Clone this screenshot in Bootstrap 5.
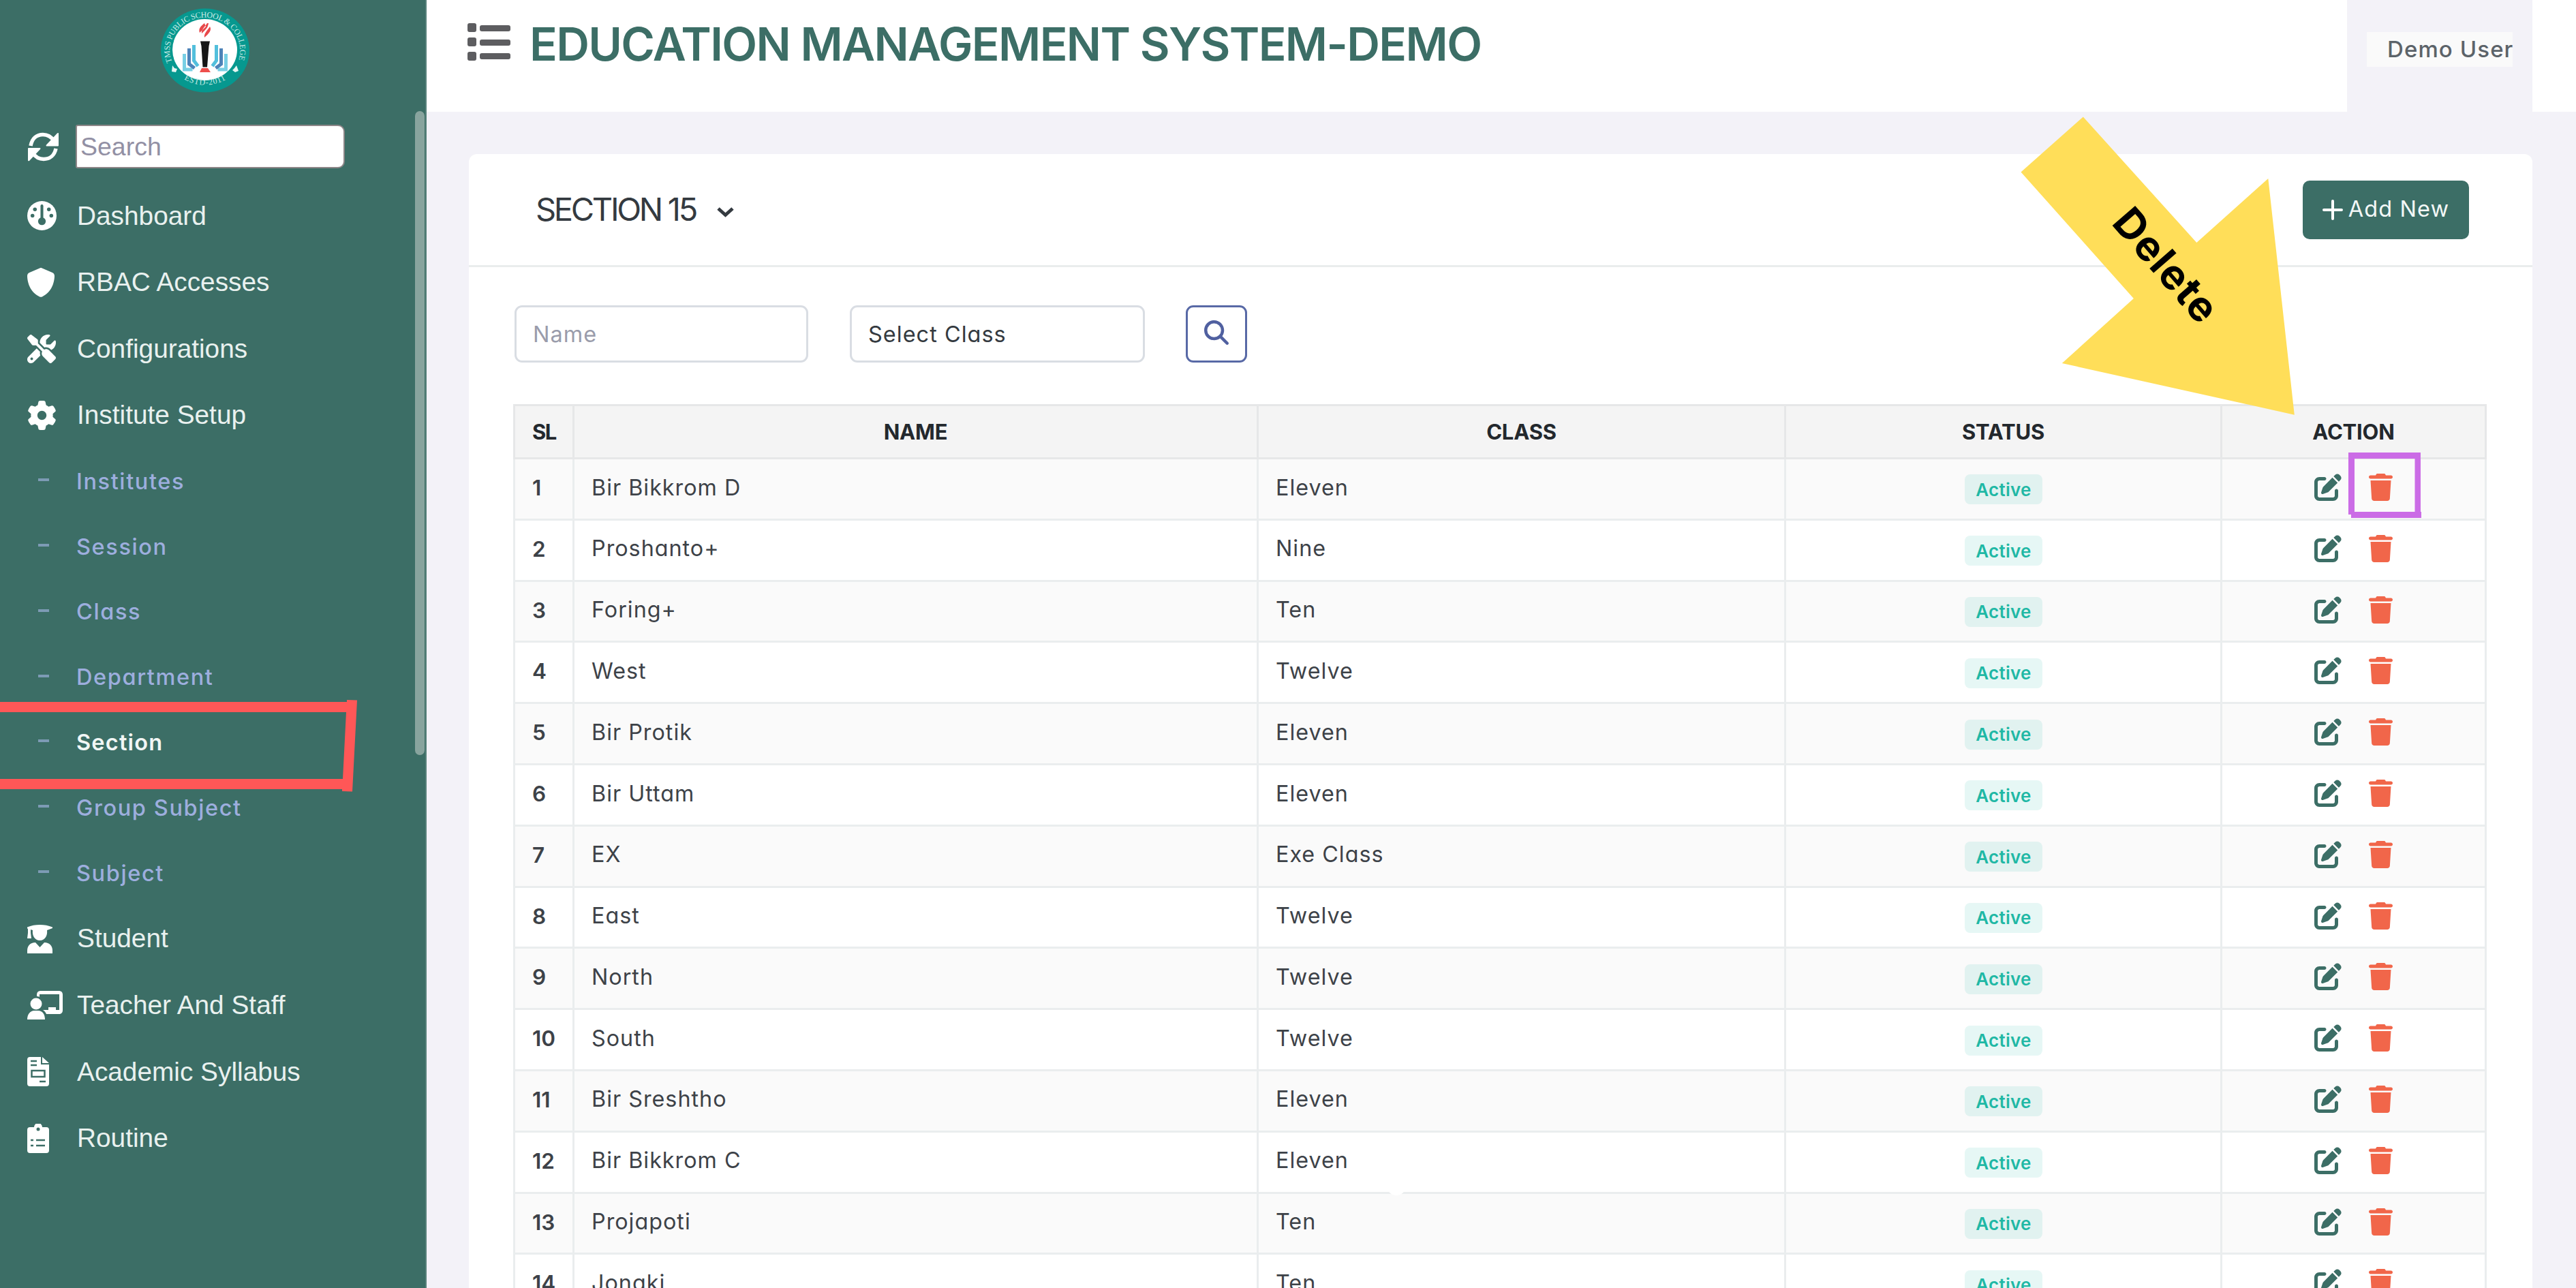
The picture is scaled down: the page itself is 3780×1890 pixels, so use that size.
<!DOCTYPE html>
<html lang="en">
<head>
<meta charset="utf-8">
<title>Education Management System - Section</title>
<link href="https://cdn.jsdelivr.net/npm/bootstrap@5.3.0/dist/css/bootstrap.min.css" rel="stylesheet">
<style>
:root{--brand:#3c6e66}
html,body{width:3780px;height:1890px;overflow:hidden}
body{font-family:Inter,"Noto Sans",sans-serif;font-feature-settings:"cv11" 1;font-size:31.5px;background:#f3f2f8;color:#343a40;line-height:1.2}
.app-shell{width:3780px;height:1890px;overflow:hidden}
.side{width:626px;background:var(--brand);border-right:2px solid #57827b;flex:none;font-family:"Liberation Sans",Arial,sans-serif}
.side-logo{height:168px;padding:11px 0 0 234px}
.side-search{height:100px;padding:15px 0 0 40px}
.side-search svg{width:47px;height:47px;margin:9px 24px 0 0}
.side-search input{width:395px;height:64px;border:2px solid #8d8688;border-radius:3px 10px 10px 3px;padding:0 5px;font-size:37.5px;color:#333}
.side-search input::placeholder{color:#9290a4;opacity:1}
.menu-main{height:97.6px;padding-left:40px;font-size:38.8px;color:#e9f1ef;white-space:nowrap}
.menu-main .ic{width:73px;flex:none;display:flex}
.menu-sub{height:95.8px;padding:0 0 0 56px;font-family:Inter,sans-serif;font-weight:500;font-size:32.5px;letter-spacing:1.6px;color:#9daede;white-space:nowrap}
.menu-sub i{width:16px;height:4px;background:#7d9bb5;margin:-4px 40px 0 0;flex:none}
.menu-sub.on{color:#f1f6f5;font-weight:600;letter-spacing:1.2px}
.scroll-thumb{left:609px;top:163px;width:14px;height:945px;border-radius:7px;background:#88a49e}
.topbar{height:164px;background:#fff;padding:0 64px 0 60px}
.brand-name{font-size:67.5px;font-weight:600;color:var(--brand);letter-spacing:-1.65px;line-height:1;padding-left:28px;margin:31px 0 0;white-space:nowrap}
.user-box{width:272px;background:#f3f2f8;padding:47px 29px 0}
.user-box div{height:51px;background:#fafafa;padding:6px 0 0 30px;font-size:33px;font-weight:500;color:#5c6369;white-space:nowrap;letter-spacing:1.1px}
.panel{margin:62px 64px 0 62px;height:1700px;border:0;border-radius:12px;background:#fff}
.panel>*{flex-shrink:0}
.panel-top{height:166px;border-bottom:3px solid #eaeded;padding:0 93px 0 98px}
.panel-top h2{font-size:47px;font-weight:400;margin:0;letter-spacing:-3.3px;white-space:nowrap}
.btn-add{width:244px;height:86px;background:var(--brand);color:#f3f7f6;border-radius:10px;font-size:32.5px;padding:0;letter-spacing:1.1px}
.btn-add:hover{background:var(--brand);color:#fff}
.filters{padding:56px 0 0 67px}
.filters .fld{height:84px;border:3px solid #d9dde3;border-radius:11px;padding:0 24px;font-size:32.5px;letter-spacing:1px;color:#343a40;background:#fff;display:flex;align-items:center}
.filters input.fld::placeholder{color:#9a9cab;opacity:1}
.btn-find{width:90px;height:84px;border:3px solid #5869a6;border-radius:11px;margin-left:60px;padding:0}
.grid-table{width:2893px;margin:61px 0 0 65px;table-layout:fixed;border-collapse:collapse;color:#3d4248;--bs-table-bg:transparent}
.grid-table th,.grid-table td{border:3px solid #eaedee;padding:0 0 3px 25px;height:89.8px;vertical-align:middle;white-space:nowrap}
.grid-table td{font-size:32.3px;letter-spacing:1px}
.grid-table thead th{height:78px;background:#f4f4f4;border-color:#e6e7e8;color:#23282d;font-weight:700;text-align:center;font-size:31px;letter-spacing:-.2px;padding:0}
.grid-table thead th:first-child{text-align:left;padding-left:25px;letter-spacing:-1.5px}
.grid-table tbody th{font-weight:600}
.grid-table tbody tr:nth-child(odd){background:#fafafa}
.grid-table td.mid{text-align:center;padding:0 0 0 1px;letter-spacing:0}
.grid-table td.acts{padding:0 0 6px}
.pill{display:inline-flex;width:114px;height:44px;border-radius:8px;background:rgba(10,179,156,.1);color:#1fb8a5;font-size:26px;font-weight:600;letter-spacing:.3px;align-items:center;justify-content:center;vertical-align:middle;position:relative;top:1px}
.overlay{left:0;top:0;pointer-events:none}
</style>
<script src="https://cdn.jsdelivr.net/npm/bootstrap@5.3.0/dist/js/bootstrap.bundle.min.js"></script>
</head>
<body>
<svg width="0" height="0" class="position-absolute">
<symbol id="pen" viewBox="0 0 512 512"><path d="M471.6 21.7c-21.9-21.9-57.3-21.9-79.2 0L362.3 51.7l97.9 97.9 30.1-30.1c21.9-21.9 21.9-57.3 0-79.2L471.6 21.7zm-299.2 220c-6.1 6.1-10.8 13.6-13.5 21.9l-29.6 88.8c-2.9 8.6-.6 18.1 5.8 24.6s15.9 8.7 24.6 5.8l88.8-29.6c8.2-2.7 15.7-7.4 21.9-13.5L437.7 172.3 339.7 74.3 172.4 241.7zM96 64C43 64 0 107 0 160V416c0 53 43 96 96 96H352c53 0 96-43 96-96V320c0-17.7-14.3-32-32-32s-32 14.3-32 32v96c0 17.7-14.3 32-32 32H96c-17.7 0-32-14.3-32-32V160c0-17.7 14.3-32 32-32h96c17.7 0 32-14.3 32-32s-14.3-32-32-32H96z"/></symbol>
<symbol id="bin" viewBox="0 0 448 512"><path d="M135.2 17.7L128 32H32C14.3 32 0 46.3 0 64S14.3 96 32 96H416c17.7 0 32-14.3 32-32s-14.3-32-32-32H320l-7.2-14.3C307.4 6.8 296.3 0 284.2 0H163.8c-12.1 0-23.2 6.8-28.6 17.7zM416 128H32L53.2 467c1.6 25.3 22.6 45 47.9 45H346.9c25.3 0 46.3-19.7 47.9-45L416 128z"/></symbol>
</svg>

<div class="app-shell d-flex position-relative">
<nav class="side">
  <div class="side-logo">
    <svg width="134" height="126" viewBox="0 0 134 126" preserveAspectRatio="none">
      <ellipse cx="67" cy="63" rx="65" ry="61.5" fill="#06988f"/>
      <ellipse cx="66.500" cy="62" rx="47.500" ry="45" fill="#fff"/>
      <defs><path id="ringTop" d="M18.500 80A51.500 48.500 0 1 1 115 80"/><path id="ringLow" d="M31 102A59 56 0 0 0 103 102"/></defs>
      <g font-family="Liberation Serif,serif" font-size="12" fill="#c9ebe6"><text><textPath href="#ringTop" textLength="188">TMSS PUBLIC SCHOOL &amp; COLLEGE</textPath></text>
      <text><textPath href="#ringLow" startOffset="6" textLength="64">ESTD-2011</textPath></text></g>
      <path d="M19 85l3 4 4 1-2 5-6-1zM113 85l-3 4-3 3 4 3 5-2z" fill="#e4f5f2"/>
      <path d="M66 24c-6 5-9 8-7 14l9-9zM70 24l2 0c-1 7-3 8-10 15-1-5 4-9 8-15zM74 29c3 5-1 10-8 16-1-5 3-9 8-16z" fill="#e8484a" transform="translate(0 -1)"/>
      <path d="M60 49.500h14l-1.500 7-2.500 31h-6.500l-2-31z" fill="#151515"/><path d="M62 89h9l4 6H59z" fill="#ee4f4c"/>
      <g fill="none" stroke-width="5"><path d="M36.500 68v23h12M97.500 68v23h-12" stroke="#78cfe4"/><path d="M43.500 60v23l8 6M90.500 60v23l-8 6" stroke="#4d83b8"/><path d="M50.500 55v23l6 8M83.500 55v23l-6 8" stroke="#52bfdc"/></g>
    </svg>
  </div>
  <div class="side-search d-flex align-items-start">
    <svg viewBox="0 0 47 47"><g fill="none" stroke="#fff" stroke-width="5.500"><path d="M5 22C7 11 14 5.500 23 5.500c7 0 12 3 16 9"/><path d="M42 26C40 36 33 41.500 24 41.500c-7 0-12-3-16-9"/></g><path d="M46 4v17.500q0 1-1 1H28q-1-1 0-2L44 3.500q2-1 2 .5zM1 43V26q0-1 1-1h17q1 1 0 2L3 44q-2 1-2-1z" fill="#fff"/></svg>
    <input type="text" placeholder="Search">
  </div>
  <div class="menu-main d-flex align-items-center"><span class="ic"><svg width="43" height="43" viewBox="0 0 42 42"><circle cx="21" cy="21" r="21" fill="#fff"/><g fill="#3c6e66"><rect x="19" y="5" width="4" height="24" rx="2"/><circle cx="21" cy="29" r="5.500"/><circle cx="11" cy="12" r="2.700"/><circle cx="31" cy="12" r="2.700"/><circle cx="7.500" cy="21" r="2.700"/><circle cx="34.500" cy="21" r="2.700"/></g></svg></span>Dashboard</div>
  <div class="menu-main d-flex align-items-center"><span class="ic"><svg width="40" height="43" viewBox="16 0 480 512" preserveAspectRatio="none" fill="#fff"><path d="M256 0c4.600 0 9.200 1 13.400 2.900L457.700 82.800c22 9.300 38.400 31 38.300 57.200c-.5 99.200-41.300 280.700-213.600 363.200c-16.700 8-36.100 8-52.800 0C57.300 420.700 16.500 239.200 16 140c-.1-26.200 16.300-47.900 38.300-57.200L242.700 2.900C246.800 1 251.400 0 256 0z"/></svg></span>RBAC Accesses</div>
  <div class="menu-main d-flex align-items-center"><span class="ic"><svg width="42" height="42" viewBox="0 0 512 512" fill="#fff"><path d="M78.600 5C69.100-2.400 55.600-1.500 47 7L7 47c-8.500 8.500-9.400 22-2.100 31.600l80 104c4.500 5.900 11.600 9.400 19 9.400h54.100l109 109c-14.700 29-10 65.400 14.300 89.600l112 112c12.500 12.500 32.800 12.500 45.300 0l64-64c12.500-12.500 12.500-32.800 0-45.300l-112-112c-24.200-24.200-60.600-29-89.600-14.300l-109-109V104c0-7.500-3.500-14.500-9.400-19L78.600 5zM19.900 396.100C7.200 408.800 0 426.100 0 444.100C0 481.600 30.400 512 67.900 512c18 0 35.300-7.200 48-19.900L233.700 374.300c-7.800-20.900-9-43.600-3.600-65.100l-61.700-61.700L19.900 396.100zM512 144c0-10.500-1.100-20.700-3.200-30.500c-2.400-11.200-16.100-14.100-24.200-6l-63.900 63.900c-3 3-7.100 4.700-11.300 4.700H352c-8.800 0-16-7.200-16-16V102.600c0-4.200 1.700-8.300 4.700-11.300l63.900-63.900c8.100-8.100 5.200-21.800-6-24.200C388.700 1.100 378.500 0 368 0C288.500 0 224 64.500 224 144l0 .8 85.300 85.300c36-9.100 75.800 .5 104 28.700L429 274.500c49-23 83-72.800 83-130.500zM56 432a24 24 0 1 1 48 0 24 24 0 1 1 -48 0z"/></svg></span>Configurations</div>
  <div class="menu-main d-flex align-items-center"><span class="ic"><svg width="43" height="43" viewBox="0 0 512 512" fill="#fff"><path fill-rule="evenodd" d="M495.900 166.600c3.200 8.700 .5 18.400-6.400 24.600l-43.300 39.400c1.100 8.300 1.700 16.800 1.700 25.400s-.6 17.100-1.700 25.400l43.300 39.400c6.900 6.200 9.600 15.900 6.400 24.600c-4.400 11.900-9.700 23.300-15.800 34.300l-4.700 8.100c-6.600 11-14 21.400-22.100 31.200c-5.900 7.200-15.700 9.600-24.500 6.800l-55.700-17.700c-13.400 10.300-28.200 18.900-44 25.400l-12.500 57.100c-2 9.100-9 16.300-18.200 17.800c-13.800 2.300-28 3.500-42.500 3.500s-28.700-1.200-42.500-3.500c-9.200-1.500-16.200-8.700-18.200-17.800l-12.500-57.100c-15.800-6.500-30.600-15.100-44-25.400L83.100 425.900c-8.800 2.800-18.600 .3-24.500-6.800c-8.100-9.800-15.500-20.200-22.100-31.200l-4.700-8.100c-6.100-11-11.400-22.400-15.800-34.300c-3.200-8.700-.5-18.400 6.400-24.600l43.300-39.400C64.600 273.100 64 264.600 64 256s.6-17.100 1.700-25.400L22.400 191.200c-6.900-6.200-9.600-15.900-6.400-24.600c4.400-11.900 9.700-23.300 15.800-34.300l4.700-8.100c6.600-11 14-21.400 22.100-31.200c5.900-7.200 15.700-9.600 24.500-6.800l55.700 17.700c13.400-10.300 28.200-18.900 44-25.400l12.500-57.100c2-9.100 9-16.300 18.200-17.800C227.300 1.200 241.500 0 256 0s28.700 1.200 42.500 3.500c9.200 1.500 16.200 8.700 18.200 17.800l12.500 57.100c15.800 6.500 30.600 15.100 44 25.400l55.700-17.700c8.800-2.800 18.600-.3 24.500 6.800c8.100 9.800 15.500 20.200 22.100 31.200l4.700 8.100c6.100 11 11.400 22.400 15.800 34.300zM256 336a80 80 0 1 0 0-160 80 80 0 1 0 0 160z"/></svg></span>Institute Setup</div>
  <div class="menu-sub d-flex align-items-center"><i></i>Institutes</div>
  <div class="menu-sub d-flex align-items-center"><i></i>Session</div>
  <div class="menu-sub d-flex align-items-center"><i></i>Class</div>
  <div class="menu-sub d-flex align-items-center"><i></i>Department</div>
  <div class="menu-sub on d-flex align-items-center"><i></i>Section</div>
  <div class="menu-sub d-flex align-items-center"><i></i>Group Subject</div>
  <div class="menu-sub d-flex align-items-center"><i></i>Subject</div>
  <div class="menu-main d-flex align-items-center"><span class="ic"><svg width="37" height="43" viewBox="0 0 37 43" fill="#fff"><path d="M0 4.500C6 2 12 1 18.500 1S31 2 37 4.500v1.500L29 9c1 8-3 15-10.500 15S7 17 8 9L5 8v5l1 8H0l1-8V7.500L0 6zM0 43v-4c0-7 4-12 12-12l6.500 7L25 27c8 0 12 5 12 12v4z"/></svg></span>Student</div>
  <div class="menu-main d-flex align-items-center"><span class="ic"><svg width="53" height="42" viewBox="0 0 53 42" fill="#fff"><circle cx="13" cy="19" r="8.500"/><path d="M0 42c0-8 5-13 10-13h6c6 0 10 5 10 13zM14 8V6c0-4 2-6 6-6h26c4 0 6 2 6 6v22c0 4-2 6-6 6H28c-1-2-2-4-5-6h8v-4h11v4h5V5H18v4c-1-1-3-1-4-1z"/></svg></span>Teacher And Staff</div>
  <div class="menu-main d-flex align-items-center"><span class="ic"><svg width="32" height="43" viewBox="0 0 32 43"><path d="M4 0h16v11h12v28q0 4-4 4H4q-4 0-4-4V4q0-4 4-4zM22 0l10 9H22z" fill="#fff"/><g stroke="#3c6e66" stroke-width="2.500" fill="none"><path d="M5 6h9M5 12h9M18 36h9"/><rect x="6.500" y="20" width="19" height="9"/></g></svg></span>Academic Syllabus</div>
  <div class="menu-main d-flex align-items-center"><span class="ic"><svg width="32" height="43" viewBox="0 0 32 43"><path d="M4 5h6a6 6 0 0 1 12 0h6q4 0 4 4v30q0 4-4 4H4q-4 0-4-4V9q0-4 4-4z" fill="#fff"/><g stroke="#3c6e66" stroke-width="2.500"><path d="M5 24h4M13 24h13M5 32h4M13 32h13"/></g><circle cx="16" cy="8" r="2.500" fill="#3c6e66"/></svg></span>Routine</div>
</nav>
<div class="scroll-thumb position-absolute"></div>

<main class="flex-grow-1">
  <header class="topbar d-flex">
    <svg width="63" height="55" viewBox="0 0 63 55" style="margin-top:34px" fill="#5d5d60"><rect width="13" height="13" rx="3"/><rect y="21" width="13" height="13" rx="3"/><rect y="42" width="13" height="13" rx="3"/><rect x="18" y="3" width="45" height="9" rx="3"/><rect x="18" y="24" width="45" height="9" rx="3"/><rect x="18" y="44" width="45" height="9" rx="3"/></svg>
    <h1 class="brand-name">EDUCATION MANAGEMENT SYSTEM-DEMO</h1>
    <div class="user-box ms-auto"><div>Demo User</div></div>
  </header>
  <section class="panel card">
    <div class="panel-top d-flex align-items-center justify-content-between">
      <h2>SECTION 15 <svg width="27" height="18" viewBox="0 0 27 18" style="margin-left:20px"><path d="M3 4l10.500 9.500L24 4" fill="none" stroke="#343a40" stroke-width="5"/></svg></h2>
      <button class="btn btn-add d-flex align-items-center justify-content-center"><svg width="30" height="30" viewBox="0 0 30 30" class="me-2"><path d="M15 2v26M2 15h26" stroke="#fff" stroke-width="4" stroke-linecap="round"/></svg>Add New</button>
    </div>
    <div class="filters d-flex">
      <input class="fld" type="text" placeholder="Name" size="1" style="width:431px">
      <div class="fld" style="width:433px;margin-left:61px">Select Class</div>
      <button class="btn btn-find"><svg width="36" height="36" viewBox="0 0 512 512" fill="#5060a0" style="margin-top:-5px"><path d="M416 208c0 45.900-14.900 88.300-40 122.700L502.600 457.400c12.500 12.500 12.500 32.800 0 45.300s-32.800 12.500-45.300 0L330.700 376c-34.400 25.200-76.800 40-122.700 40C93.100 416 0 322.900 0 208S93.100 0 208 0S416 93.100 416 208zM208 352a144 144 0 1 0 0-288 144 144 0 1 0 0 288z"/></svg></button>
    </div>
    <table class="grid-table">
      <colgroup><col style="width:87px"><col style="width:1004px"><col style="width:774px"><col style="width:640px"><col style="width:388px"></colgroup>
      <thead><tr><th>SL</th><th>NAME</th><th>CLASS</th><th>STATUS</th><th>ACTION</th></tr></thead>
      <tbody id="rows"></tbody>
    </table>
  </section>
</main>

<svg class="overlay position-absolute" width="3780" height="1890" viewBox="0 0 3780 1890">
  <path d="M0 1030H509V1027L524 1027.500L517 1161.500L502 1161V1158H0V1143H503L508 1045H0z" fill="#ff5757"/>
  <path d="M3056.800 171.500L3223.300 356L3328.300 262L3366.800 608.700L3025.800 533L3130.900 438L2965.500 252.500z" fill="#ffde59"/>
  <text transform="translate(3097 328) rotate(49)" font-family="Inter" font-weight="700" font-size="61" textLength="199" fill="#000">Delete</text>
  <path fill-rule="evenodd" d="M3446 664H3552V751H3553V760H3450V755H3446zM3455 673V751H3543.500V673z" fill="#cb6ce6"/>
  <circle cx="2049" cy="1740" r="14" fill="#fff"/>
</svg>
</div>
<script>
const data=[["Bir Bikkrom D","Eleven"],["Proshanto+","Nine"],["Foring+","Ten"],["West","Twelve"],["Bir Protik","Eleven"],["Bir Uttam","Eleven"],["EX","Exe Class"],["East","Twelve"],["North","Twelve"],["South","Twelve"],["Bir Sreshtho","Eleven"],["Bir Bikkrom C","Eleven"],["Projapoti","Ten"],["Jonaki","Ten"]];
document.getElementById("rows").innerHTML=data.map((r,i)=>`<tr><th>${i+1}</th><td>${r[0]}</td><td>${r[1]}</td><td class="mid"><span class="pill">Active</span></td><td class="mid acts"><svg width="40" height="40" fill="#3c6e66"><use href="#pen"/></svg><svg width="35" height="40" fill="#f1664a" style="margin-left:40px"><use href="#bin"/></svg></td></tr>`).join("");
</script>
</body>
</html>
